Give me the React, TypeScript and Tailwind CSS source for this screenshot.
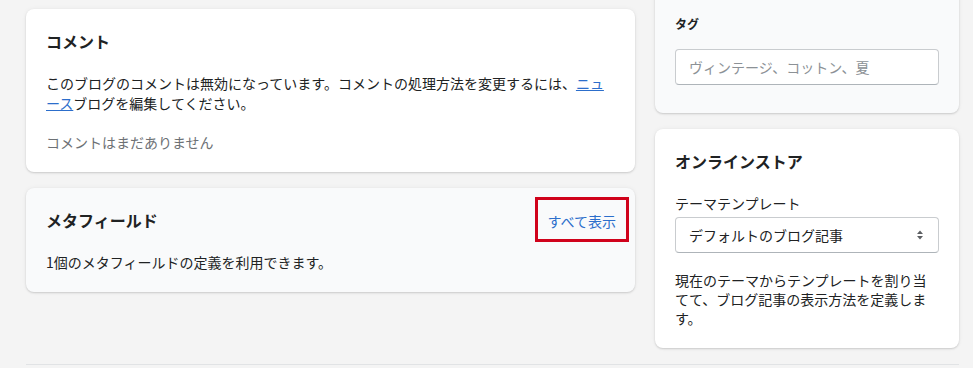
const card =
  "rounded-lg shadow-[0_0_5px_rgba(23,24,24,0.05),0_1px_2px_rgba(0,0,0,0.15)]"

const SelectArrows = () => (
  <svg width="8" height="12" viewBox="0 0 8 12" aria-hidden="true">
    <path d="M4 1.5 L7 5 H1 Z" fill="#5c5f62" />
    <path d="M4 10.5 L7 7 H1 Z" fill="#5c5f62" />
  </svg>
)

export default function App() {
  return (
    <div
      className="min-h-[368px] w-full overflow-hidden bg-[#f4f4f4] text-[#202223]"
      style={{ fontFamily: '"Noto Sans CJK JP", "Noto Sans", sans-serif' }}
    >
      <div className="flex gap-5 pl-[26px] pr-[14px]">
        {/* main column */}
        <div className="flex w-[609px] shrink-0 flex-col gap-4 pt-[9px]">
          <section className={`${card} bg-white`}>
            <div className="px-5 pt-5">
              <h2 className="text-base font-semibold leading-6">コメント</h2>
            </div>
            <div className="p-5 text-sm leading-5">
              <p>
                このブログのコメントは無効になっています。コメントの処理方法を変更するには、
                <a href="#" className="text-[#2c6ecb] underline">
                  ニュース
                </a>
                ブログを編集してください。
              </p>
              <p className="mt-[19px] text-[#6d7175]">コメントはまだありません</p>
            </div>
          </section>

          <section className={`${card} bg-[#f9fafb]`}>
            <div className="flex items-center justify-between px-5 pt-5">
              <h2 className="text-base font-semibold leading-6">メタフィールド</h2>
              <div className="relative mr-[-1px]">
                <a href="#" className="text-sm leading-5 text-[#2c6ecb]">
                  すべて表示
                </a>
                <span className="pointer-events-none absolute -inset-x-[13px] -top-[11px] -bottom-[10px] border-[3px] border-[#d0021b]" />
              </div>
            </div>
            <div className="p-5 text-sm leading-5">
              <p>1個のメタフィールドの定義を利用できます。</p>
            </div>
          </section>
        </div>

        {/* side column */}
        <div className="flex w-[304px] shrink-0 flex-col gap-4">
          <section className={`${card} -mt-4 bg-[#f9fafb] px-5 pt-[31px] pb-[28px]`}>
            <h3 className="text-[12px] font-semibold leading-[18px]">タグ</h3>
            <input
              type="text"
              placeholder="ヴィンテージ、コットン、夏"
              className="mt-[16px] h-9 w-full rounded border border-[#c9cccf] border-b-[#aeb4b9] bg-white px-[13px] text-sm placeholder:text-[#8c9196] focus:outline-none"
            />
          </section>

          <section className={`${card} bg-white`}>
            <div className="px-5 pt-5">
              <h2 className="text-base font-semibold leading-6">オンラインストア</h2>
            </div>
            <div className="p-5 text-sm">
              <label className="block leading-5">テーマテンプレート</label>
              <div className="mt-1 flex h-9 items-center justify-between rounded border border-[#c9cccf] border-b-[#aeb4b9] bg-white pl-[13px] pr-[14px]">
                <span className="leading-5">デフォルトのブログ記事</span>
                <SelectArrows />
              </div>
              <p className="mt-[18px] leading-[19px]">
                現在のテーマからテンプレートを割り当てて、ブログ記事の表示方法を定義します。
              </p>
            </div>
          </section>
        </div>
      </div>
      <div className="ml-[26px] mr-[14px] mt-4 border-t border-[#e1e3e5]" />
    </div>
  )
}
